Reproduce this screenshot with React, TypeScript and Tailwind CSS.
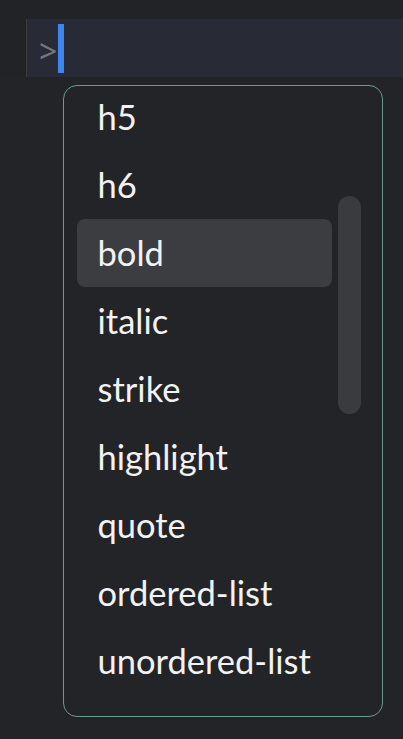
import React from "react";

const items = [
  "h5",
  "h6",
  "bold",
  "italic",
  "strike",
  "highlight",
  "quote",
  "ordered-list",
  "unordered-list",
  "source-block",
];

export default function App() {
  return (
    <div
      className="w-[403px] h-[739px] bg-[#232428] overflow-hidden flex flex-col"
      style={{ fontFamily: 'Lato, "Noto Sans", sans-serif' }}
    >
      <div className="h-[19px] bg-[#222327]" />
      <div className="h-[58px] flex bg-[#222327]">
        <div className="w-[26px]" />
        <div className="flex-1 flex items-center bg-[#282a35] border-l border-[#3a3b3f]">
          <span
            className="ml-[12px] text-[32px] leading-none text-[#76777c] pt-[6px]"
            style={{ fontFamily: '"Noto Sans", sans-serif' }}
          >
            &gt;
          </span>
          <div className="ml-[1px] w-[6px] h-[49px] bg-[#3d86ef]" />
        </div>
      </div>
      <div className="pt-[8px] pl-[63px]">
        <div className="relative w-[320px] h-[632px] rounded-[14px] border-[1.5px] border-[#6b9b8c] overflow-hidden">
          <div className="mt-[-3.5px] pl-[12.5px] flex flex-col">
            {items.map((t) => (
              <div
                key={t}
                className={`w-[255px] h-[68px] shrink-0 rounded-[8px] pl-[21px] pt-[1.5px] text-[34.5px] leading-[66px] text-[#f2f2f2] ${
                  t === "bold" ? "bg-[#3c3d41]" : ""
                }`}
              >
                {t}
              </div>
            ))}
          </div>
          <div className="absolute left-[273.5px] top-[109.5px] w-[23px] h-[218px] rounded-full bg-[#3a3b3f]" />
        </div>
      </div>
    </div>
  );
}
